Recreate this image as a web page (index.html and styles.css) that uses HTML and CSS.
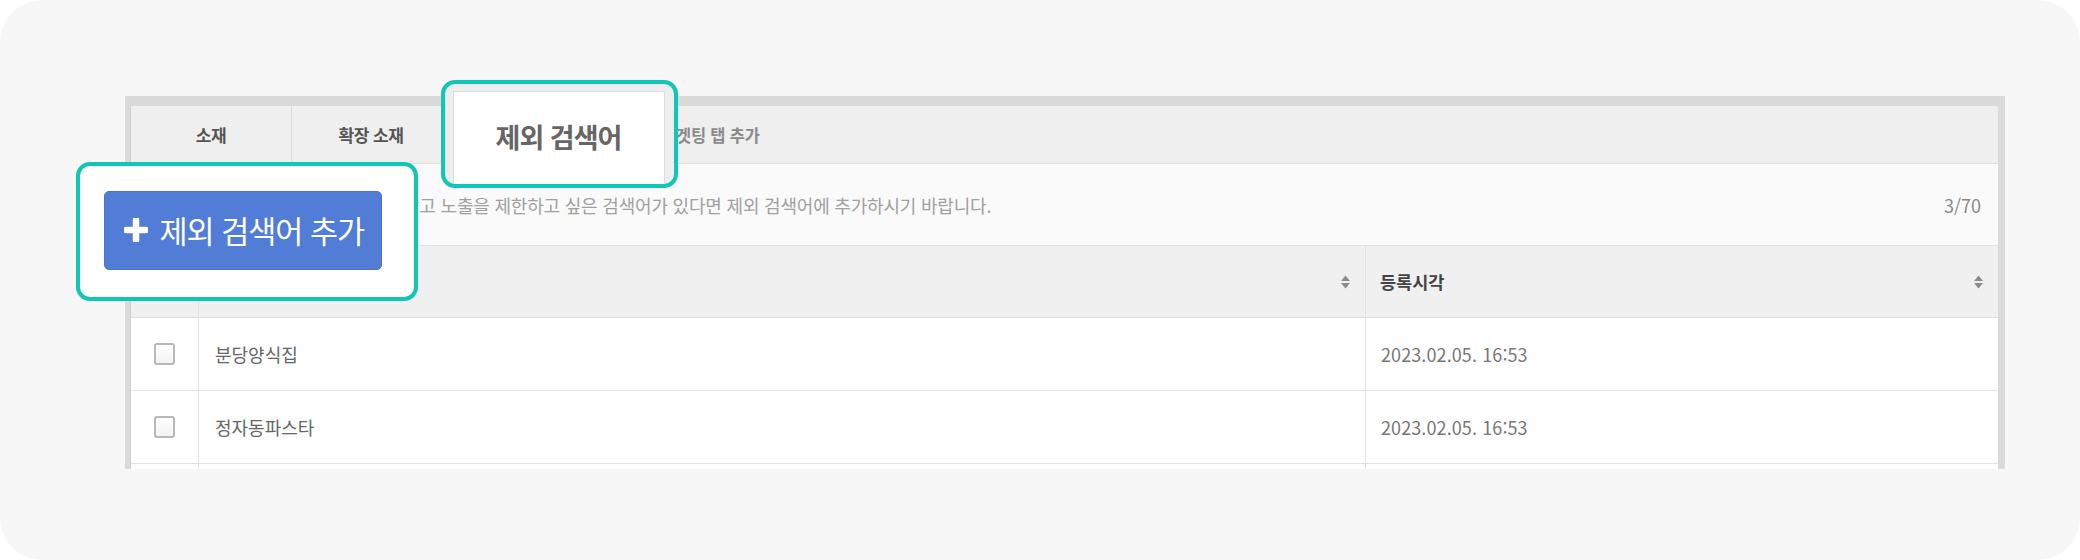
FILE: index.html
```html
<!DOCTYPE html>
<html lang="ko">
<head>
<meta charset="utf-8">
<title>제외 검색어</title>
<link rel="stylesheet" href="styles.css">
</head>
<body>
<div class="panel">
  <div class="frame">
    <div class="inner">
      <div class="tabs">
        <div class="tab tab-1">소재</div>
        <div class="tab tab-2">확장 소재</div>
        <div class="tab tab-3 active"><span class="covered">제외 검색어</span></div>
        <div class="tab-link">타겟팅 탭 추가</div>
      </div>
      <div class="notice">
        <span class="notice-text">광고 노출을 제한하고 싶은 검색어가 있다면 제외 검색어에 추가하시기 바랍니다.</span>
        <span class="count">3/70</span>
      </div>
      <div class="table">
        <div class="row head">
          <div class="cell check"></div>
          <div class="cell sortable"><span class="covered">검색어</span>
            <svg class="sort" width="9" height="14" viewBox="0 0 9 14"><path d="M0 6 L4.5 0.5 L9 6 Z M0 8 L4.5 13.5 L9 8 Z"/></svg>
          </div>
          <div class="cell sortable"><span>등록시각</span>
            <svg class="sort" width="9" height="14" viewBox="0 0 9 14"><path d="M0 6 L4.5 0.5 L9 6 Z M0 8 L4.5 13.5 L9 8 Z"/></svg>
          </div>
        </div>
        <div class="row">
          <div class="cell check"><span class="box"></span></div>
          <div class="cell">분당양식집</div>
          <div class="cell date">2023.02.05. 16:53</div>
        </div>
        <div class="row">
          <div class="cell check"><span class="box"></span></div>
          <div class="cell">정자동파스타</div>
          <div class="cell date">2023.02.05. 16:53</div>
        </div>
        <div class="row">
          <div class="cell check"></div>
          <div class="cell"></div>
          <div class="cell date"></div>
        </div>
      </div>
    </div>
  </div>

  <div class="callout callout-tab">
    <div class="zoom-tab">제외 검색어</div>
  </div>

  <div class="callout callout-btn">
    <button class="add-btn" type="button">
      <svg class="plus" width="24" height="24" viewBox="0 0 24 24"><path d="M12 2 V22 M2 12 H22" stroke="#fff" stroke-width="6.5" stroke-linecap="round"/></svg>
      <span>제외 검색어 추가</span>
    </button>
  </div>
</div>
</body>
</html>
```

FILE: styles.css
```css
* { box-sizing: border-box; }

html, body {
  margin: 0;
  padding: 0;
  background: #ffffff;
}

body {
  font-family: "Noto Sans CJK KR", "Noto Sans", sans-serif;
  width: 2080px;
  height: 560px;
  overflow: hidden;
}

.panel {
  position: relative;
  width: 2080px;
  height: 560px;
  background: #f7f7f7;
  border-radius: 42px;
  padding: 96px 75px 0 125px;
}

.frame {
  height: 373px;
  background: #dadada;
  padding: 10px 7px 0 5px;
  overflow: hidden;
}

.inner {
  height: 100%;
  background: #ffffff;
  border-radius: 0 4px 0 0;
  overflow: hidden;
  border-left: 1px solid #d0d0d0;
}

.covered { visibility: hidden; }

/* tabs */
.tabs {
  display: flex;
  height: 58px;
  background: #efefef;
  border-bottom: 1px solid #dedede;
}

.tab {
  display: flex;
  align-items: center;
  justify-content: center;
  font-size: 17px;
  font-weight: 700;
  color: #555555;
  letter-spacing: -0.5px;
  border-right: 1px solid #dcdcdc;
}

.tab-1 { width: 161px; }
.tab-2 { width: 159px; }
.tab-3 { width: 190px; background: #ffffff; }

.tab-link {
  display: flex;
  align-items: center;
  padding-left: 20px;
  font-size: 16.5px;
  font-weight: 700;
  color: #8a8a8a;
  letter-spacing: -0.2px;
}

/* notice */
.notice {
  height: 82px;
  display: flex;
  align-items: center;
  justify-content: space-between;
  background: #fafafa;
  border-bottom: 1px solid #e2e2e2;
  padding: 0 17px 0 272px;
}

.notice-text {
  font-size: 18px;
  color: #a0a0a0;
  letter-spacing: -0.2px;
}

.count {
  font-size: 18px;
  color: #888888;
}

/* table */
.row {
  display: grid;
  grid-template-columns: 68px 1167px 1fr;
  height: 73px;
  border-bottom: 1px solid #e3e3e3;
  background: #ffffff;
}

.row.head {
  height: 72px;
  background: #f0f0f0;
  border-bottom: 1px solid #e0e0e0;
}

.cell {
  display: flex;
  align-items: center;
  padding-left: 16px;
  font-size: 18px;
  color: #666666;
  border-right: 1px solid #e3e3e3;
}

.cell:last-child { border-right: none; }

.cell.check {
  padding-left: 0;
  justify-content: center;
}

.cell.date {
  padding-left: 15px;
  font-size: 18px;
  color: #777777;
  letter-spacing: 0.1px;
}

.head .cell {
  font-size: 17.5px;
  font-weight: 700;
  color: #444444;
  justify-content: space-between;
  padding-right: 15px;
  padding-left: 14px;
}

.head .cell.check { padding: 0; }

.sort { fill: #8c8c8c; }

.box {
  width: 21px;
  height: 22px;
  border: 2px solid #b8b8b8;
  border-radius: 3px;
  background: linear-gradient(#ffffff, #f3f3f3);
}

/* callouts (highlight overlays) */
.callout {
  position: absolute;
  border: 4.5px solid #10c7b6;
  border-radius: 14px;
  overflow: hidden;
}

.callout-tab {
  left: 441px;
  top: 80px;
  width: 237px;
  height: 108px;
  background: #eeeeee;
  padding: 6.5px 9.5px 0 7.5px;
}

.zoom-tab {
  height: 120px;
  background: #ffffff;
  border: 1.5px solid #dddddd;
  display: flex;
  justify-content: center;
  padding-top: 25px;
  font-size: 27px;
  font-weight: 700;
  color: #666666;
  letter-spacing: -1px;
}

.callout-btn {
  left: 76px;
  top: 162px;
  width: 342px;
  height: 139px;
  background: #ffffff;
  padding: 24.5px 0 0 23.5px;
}

.add-btn {
  width: 278px;
  height: 79px;
  display: flex;
  align-items: center;
  gap: 12px;
  padding: 0 0 0 19px;
  background: #517dd6;
  border: 1px solid #4a74c8;
  border-radius: 5px;
  color: #ffffff;
  font-family: "Noto Sans CJK KR", sans-serif;
  font-size: 30.5px;
  letter-spacing: -1px;
}

.plus { flex: none; }
```
